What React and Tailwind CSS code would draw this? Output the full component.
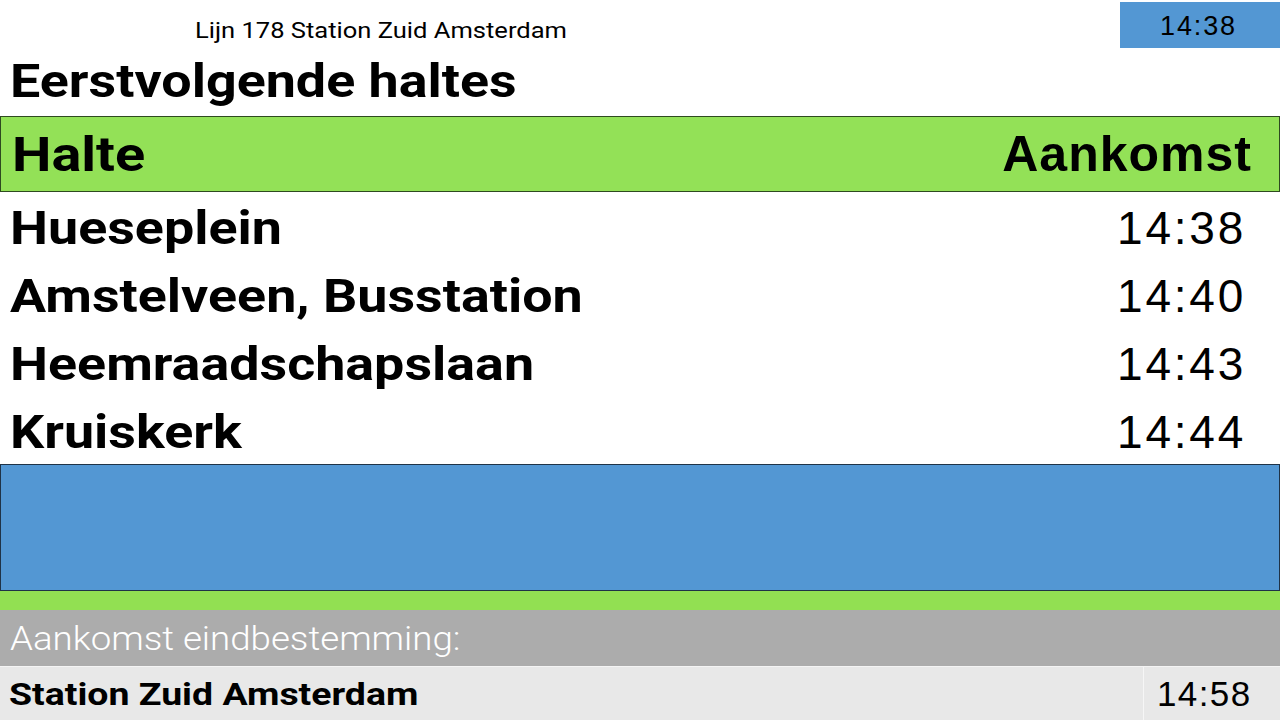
export default function App() {
    const stops = [
        { name: 'Hueseplein', time: '14:38' },
        { name: 'Amstelveen, Busstation', time: '14:40' },
        { name: 'Heemraadschapslaan', time: '14:43' },
        { name: 'Kruiskerk', time: '14:44' },
    ];

    return (
        <div className="w-[1280px] h-[720px] bg-white flex flex-col overflow-hidden font-['Roboto',sans-serif] text-black">
            {/* Top bar */}
            <div className="h-[50px] flex items-start justify-between">
                <div className="pl-[195px] pt-[16px] text-[22px] leading-[30px]">
                    <span className="inline-block origin-left scale-x-[1.16]">Lijn 178 Station Zuid Amsterdam</span>
                </div>
                <div className="mt-[2px] w-[160px] h-[46px] bg-[#5397d3] flex items-center pl-[40px] pt-[3px] font-['Liberation_Sans',sans-serif] text-[27px] tracking-[0.07em]">
                    14:38
                </div>
            </div>

            {/* Title */}
            <div className="h-[66px] pl-[10px] pb-[5px] flex items-center text-[46px] font-bold leading-none">
                <span className="inline-block origin-left scale-x-[1.17]">Eerstvolgende haltes</span>
            </div>

            {/* Table header */}
            <div className="h-[76px] bg-[#93e157] border border-[#2e4a20] flex items-center justify-between pl-[11px] pr-[27px]">
                <span className="inline-block origin-left scale-x-[1.14] text-[49px] font-bold leading-none">Halte</span>
                <span className="font-['Liberation_Sans',sans-serif] text-[50px] font-bold leading-none tracking-[0.02em]">Aankomst</span>
            </div>

            {/* Stops */}
            <div className="flex flex-col">
                {stops.map((stop) => (
                    <div key={stop.name} className="h-[68px] flex items-center justify-between pl-[10px] pr-[34px] pt-[3px]">
                        <span className="inline-block origin-left scale-x-[1.17] text-[46px] font-bold leading-none">{stop.name}</span>
                        <span className="font-['Liberation_Sans',sans-serif] text-[46px] tracking-[0.06em] leading-none">{stop.time}</span>
                    </div>
                ))}
            </div>

            {/* Info panel */}
            <div className="h-[127px] bg-[#5397d3] border border-[#1f3347]" />

            <div className="h-[19px] bg-[#92e052]" />

            {/* Destination */}
            <div className="h-[56px] bg-[#acacac] flex items-center pl-[10px] text-[33px] font-light text-white leading-none">
                <span className="inline-block origin-left scale-x-[1.11]">Aankomst eindbestemming:</span>
            </div>
            <div className="flex-1 bg-[#e8e8e8] flex border-t border-[#f4f4f4]">
                <div className="flex-1 flex items-center pl-[9px] text-[32px] font-bold leading-none">
                    <span className="inline-block origin-left scale-x-[1.17]">Station Zuid Amsterdam</span>
                </div>
                <div className="w-[137px] border-l border-[#f6f6f6] flex items-center pl-[13px] font-['Liberation_Sans',sans-serif] text-[35px] tracking-[0.04em] leading-none">
                    14:58
                </div>
            </div>
        </div>
    );
}
